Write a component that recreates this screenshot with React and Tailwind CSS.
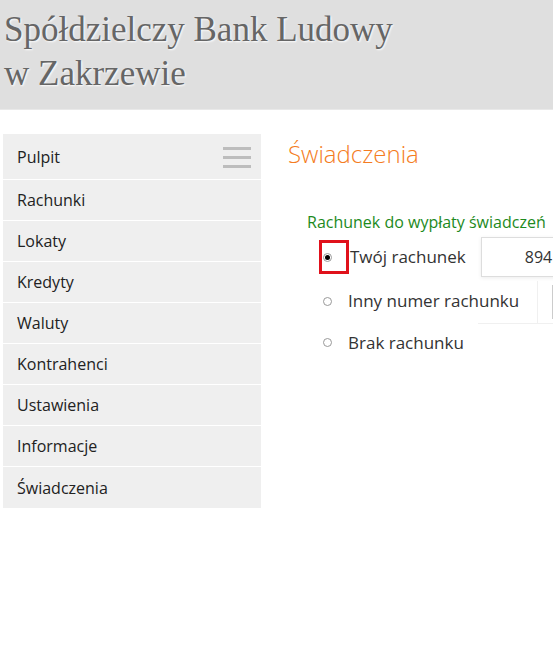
import React from 'react';

const menu = ['Rachunki', 'Lokaty', 'Kredyty', 'Waluty', 'Kontrahenci', 'Ustawienia', 'Informacje', 'Świadczenia'];

const Radio = ({ checked }) => (
    <span className="inline-flex w-[9px] h-[9px] rounded-full border border-[#999] bg-white items-center justify-center">
        {checked && <span className="w-[5px] h-[5px] rounded-full bg-black" />}
    </span>
);

export default function App() {
    return (
        <div className="w-[553px] h-[650px] overflow-hidden bg-white" style={{ fontFamily: '"Open Sans", sans-serif' }}>
            {/* Header */}
            <div className="h-[110px] bg-[#dfdfdf] border-b border-[#e9e9e9] pl-[4px] pt-[8px]">
                <h1
                    className="text-[35px] leading-[44px] text-[#666]"
                    style={{ fontFamily: '"Liberation Serif", serif', textShadow: '1px 1px 2px #fff' }}
                >
                    Spółdzielczy Bank Ludowy
                    <br />
                    w Zakrzewie
                </h1>
            </div>

            <div className="flex pt-[24px]">
                {/* Sidebar */}
                <div className="ml-[3px] w-[258px] shrink-0 bg-[#efefef]">
                    <div className="h-[46px] flex items-center justify-between pl-[14px] pr-[10px] border-b border-white text-[16px] text-[#222]">
                        <span>Pulpit</span>
                        <div className="flex flex-col gap-[6px] pt-[1px]">
                            <span className="block w-[28px] h-[3px] bg-[#bdbdbd]" />
                            <span className="block w-[28px] h-[3px] bg-[#bdbdbd]" />
                            <span className="block w-[28px] h-[3px] bg-[#bdbdbd]" />
                        </div>
                    </div>
                    {menu.map((m, i) => (
                        <div
                            key={m}
                            className={`h-[41px] flex items-center pl-[14px] text-[16px] text-[#222] ${i < menu.length - 1 ? 'border-b border-white' : ''}`}
                        >
                            {m}
                        </div>
                    ))}
                </div>

                {/* Main */}
                <div className="ml-[27px] shrink-0 w-[400px]">
                    <h2 className="text-[24px] leading-[30px] font-light text-[#f47c22] mt-[5px]">Świadczenia</h2>
                    <div className="mt-[41px] ml-[19px] text-[16px] text-[#1d8a1d] whitespace-nowrap">Rachunek do wypłaty świadczeń</div>
                    <div className="ml-[31px] mt-[1px] text-[17px] text-[#333]">
                        <div className="flex items-center h-[44px]">
                            <span className="w-[30px] h-[34px] border-[3px] border-[#e0111b] flex items-center pl-[1px] mr-[1px]">
                                <Radio checked />
                            </span>
                            <span className="whitespace-nowrap">Twój rachunek</span>
                            <div className="ml-[15px] w-[200px] h-[40px] border border-[#ddd] shadow-[0_1px_4px_rgba(0,0,0,0.08)] flex items-center pl-[43px] text-[16px]">
                                894
                            </div>
                        </div>
                        <div className="flex items-stretch h-[44px]">
                            <div className="flex items-center">
                                <span className="ml-[4px] mr-[16px] flex"><Radio /></span>
                                <span className="whitespace-nowrap">Inny numer rachunku</span>
                            </div>
                            <div className="ml-[18px] mt-[2px] border-l border-[#f0f0f0] w-[200px] flex items-center pl-[14px]">
                                <div className="w-[100px] h-[34px] border border-[#ccc]" />
                            </div>
                        </div>
                        <div className="ml-[159px] h-px bg-[#f0f0f0]" />
                        <div className="flex items-center h-[37px]">
                            <span className="ml-[4px] mr-[16px] flex"><Radio /></span>
                            <span className="whitespace-nowrap">Brak rachunku</span>
                        </div>
                    </div>
                </div>
            </div>
        </div>
    );
}
